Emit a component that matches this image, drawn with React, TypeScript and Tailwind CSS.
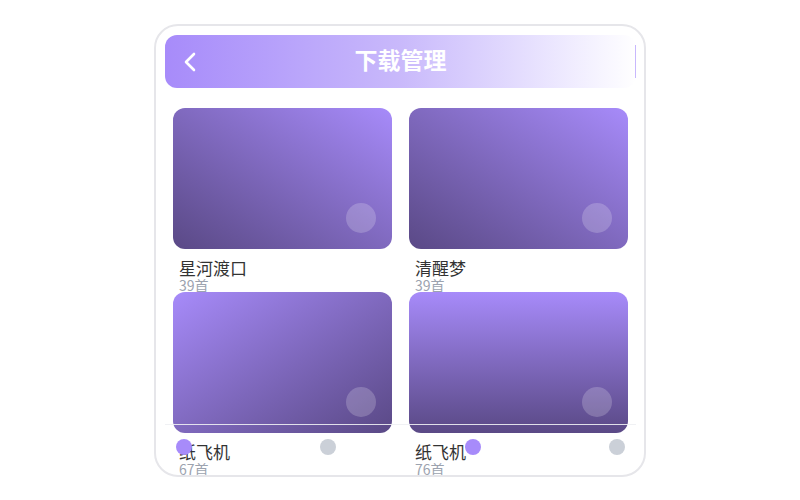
import React from "react";

interface Album {
  name: string;
  count: number;
  gradient: string;
}

const albums: Album[] = [
  { name: "星河渡口", count: 39, gradient: "bg-gradient-to-bl from-[#a78bfa] to-[#5a4986]" },
  { name: "清醒梦", count: 39, gradient: "bg-gradient-to-bl from-[#a78bfa] to-[#5a4986]" },
  { name: "纸飞机", count: 67, gradient: "bg-gradient-to-br from-[#a78bfa] to-[#5a4986]" },
  { name: "纸飞机", count: 76, gradient: "bg-gradient-to-b from-[#a78bfa] to-[#5a4986]" },
];

const font = { fontFamily: '"Noto Sans CJK SC", "Noto Sans", sans-serif' };

const AlbumCard: React.FC<{ album: Album }> = ({ album }) => (
  <div className="flex flex-col">
    <div className={`relative h-[141px] rounded-[12px] ${album.gradient}`}>
      <div className="absolute right-[16px] bottom-[16px] w-[30px] h-[30px] rounded-full bg-white/20" />
    </div>
    <div className="mt-[8px] pl-[6px] text-[17px] leading-[22px] text-[#333333]">{album.name}</div>
    <div className="pl-[6px] text-[14px] leading-[13px] text-[#9ca3af]">{album.count}首</div>
  </div>
);

export default function App() {
  return (
    <div className="w-[800px] h-[500px] bg-white flex justify-center pt-[24px]" style={font}>
      <div className="relative w-[492px] h-[453px] rounded-[24px] border-2 border-[#e6e6ea] bg-white overflow-hidden px-[9px] pt-[9px]">
        <div className="relative h-[53px] w-[471px] rounded-[12px] bg-gradient-to-r from-[#a78bfa] via-[#c9b9fb] to-white flex items-center justify-center pb-[4px]">
          <svg className="absolute left-[17px] top-[17px]" width="16" height="20" viewBox="0 0 16 20" fill="none">
            <path d="M12 2 L4 10 L12 18" stroke="white" strokeWidth="2.6" strokeLinecap="round" strokeLinejoin="round" />
          </svg>
          <span className="text-white font-bold text-[23px] tracking-[0px]">下载管理</span>
          <div className="absolute right-0 top-[10px] h-[33px] w-[1.5px] bg-[#c8b8fd]" />
        </div>

        <div className="grid grid-cols-2 gap-x-[17px] px-[8px] pt-[20px] w-[471px]">
          {albums.map((a, i) => (
            <AlbumCard key={i} album={a} />
          ))}
        </div>

        <div className="absolute left-[9px] top-[398px] w-[471px] h-[44px] border-t border-[#eef0f3]/90 flex items-center justify-between px-[11px]">
          <div className="w-[16px] h-[16px] rounded-full bg-[#a78bfa]" />
          <div className="w-[16px] h-[16px] rounded-full bg-[#cbd0d8]" />
          <div className="w-[16px] h-[16px] rounded-full bg-[#a78bfa]" />
          <div className="w-[16px] h-[16px] rounded-full bg-[#cbd0d8]" />
        </div>
      </div>
    </div>
  );
}
